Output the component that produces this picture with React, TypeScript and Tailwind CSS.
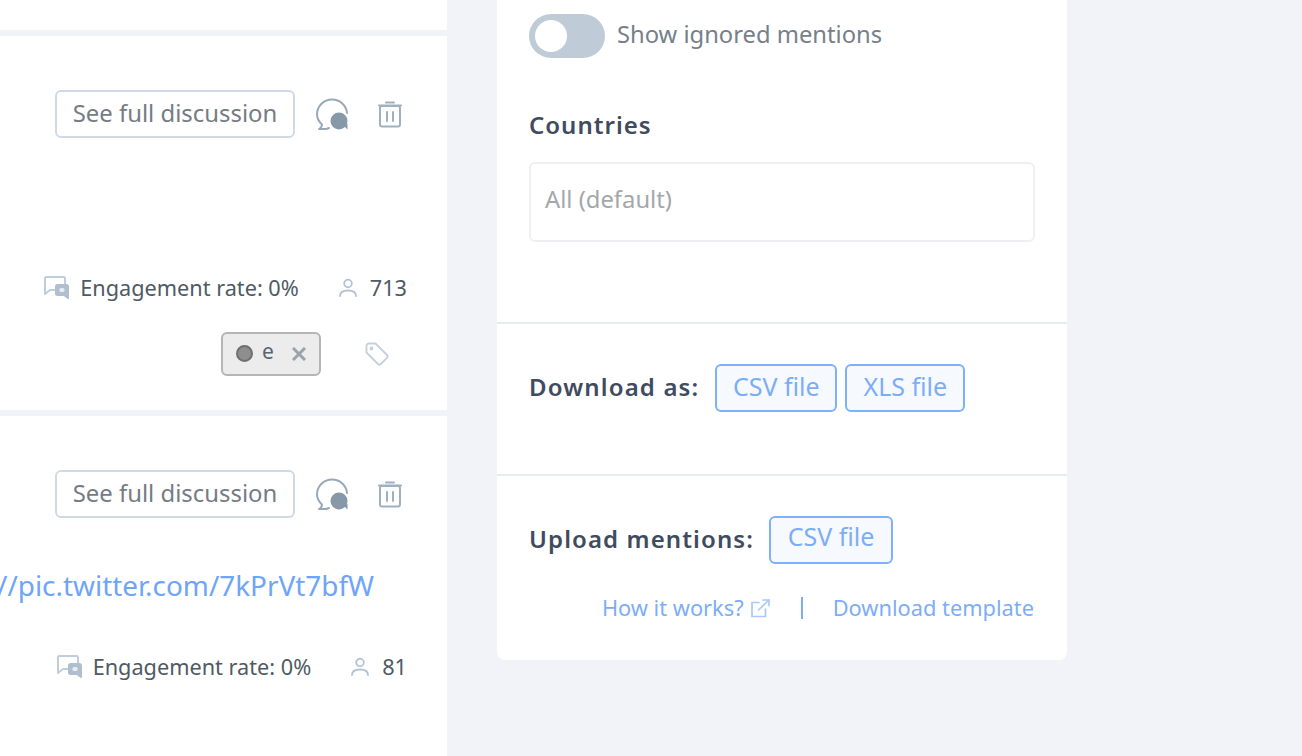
const font = { fontFamily: '"Noto Sans", "Open Sans", sans-serif' };

const ChatIcon = () => (
  <svg width="36" height="36" viewBox="0 0 36 36" fill="none">
    <path
      d="M8 28.500C4.800 25.500 3 22.500 3 18.500 3 10 10 3.500 18 3.500c8 0 14.500 6 15 13.500M8 28.500c0 1.800-1.200 3.500-3 4.500h7l3-1"
      stroke="#97a9b9"
      strokeWidth="2"
      strokeLinecap="round"
      strokeLinejoin="round"
    />
    <circle cx="25" cy="25" r="8.500" fill="#8799a9" />
    <path d="M30 30l3.500 3.500v-6z" fill="#8799a9" />
  </svg>
);

const TrashIcon = () => (
  <svg width="26" height="30" viewBox="0 0 26 30" fill="none" stroke="#9fb0bf" strokeWidth="2" strokeLinecap="round">
    <path d="M2 6.500h22M9 3.500h8" />
    <rect x="3" y="7" width="20" height="20.500" rx="2" />
    <path d="M10 13v9M16 13v9" />
  </svg>
);

const EngagementIcon = () => (
  <svg width="28" height="26" viewBox="0 0 28 26" fill="none">
    <path d="M2 19V3.500A1.500 1.500 0 0 1 3.500 2h17A1.500 1.500 0 0 1 22 3.500V9M2 19l5-4h6" stroke="#c0cddb" strokeWidth="2" strokeLinecap="round" strokeLinejoin="round" />
    <path d="M13 11.500A1.500 1.500 0 0 1 14.500 10h9a1.500 1.500 0 0 1 1.500 1.500V23l-4-3h-6.500a1.500 1.500 0 0 1-1.500-1.500z" stroke="#b0bfce" strokeWidth="2" fill="#b0bfce" strokeLinejoin="round" />
    <rect x="16.500" y="13" width="5" height="4" rx="1.500" fill="#e6ecf2" />
  </svg>
);

const UserIcon = () => (
  <svg width="20" height="20" viewBox="0 0 20 20" fill="none" stroke="#b4c3d3" strokeWidth="1.800" strokeLinecap="round">
    <circle cx="10" cy="5.500" r="3.800" />
    <path d="M2 18c0-3.500 3-5.500 8-5.500s8 2 8 5.500" />
  </svg>
);

const ExternalIcon = () => (
  <svg width="21" height="20" viewBox="0 0 21 20" fill="none" stroke="#a8cafb" strokeWidth="1.700" strokeLinecap="round">
    <path d="M9 4.500H2V18.500H15.500V11" />
    <path d="M8.500 12L19 2M13 2H19V7.500" />
  </svg>
);

const TagIcon = () => (
  <svg width="26" height="26" viewBox="0 0 26 26" fill="none" stroke="#c4d0db" strokeWidth="1.800" strokeLinejoin="round">
    <path d="M2.500 5A2.500 2.500 0 0 1 5 2.500h6.500L23 14a2 2 0 0 1 0 2.800L16.800 23a2 2 0 0 1-2.800 0L2.500 11.500z" />
    <circle cx="7.500" cy="7.500" r="1" />
  </svg>
);

const Separator = () => <div className="h-[6px] bg-[#f2f3f8]" />;

const DiscussionRow = () => (
  <div className="flex items-center justify-end pr-[44px]">
    <button className="flex h-[48px] w-[240px] items-center justify-center rounded-[6px] border-2 border-[#cfdae5] bg-white pb-[2px] text-[23.900px] text-[#757c84]">
      See full discussion
    </button>
    <span className="ml-[19px] flex">
      <ChatIcon />
    </span>
    <span className="ml-[27px] flex">
      <TrashIcon />
    </span>
  </div>
);

const Stats = ({ reach, pr }: { reach: string; pr: string }) => (
  <div className={`flex items-center justify-end text-[21.700px] text-[#4f5a64] ${pr}`}>
    <EngagementIcon />
    <span className="ml-[9px]">Engagement rate: 0%</span>
    <span className="ml-[39px] flex">
      <UserIcon />
    </span>
    <span className="ml-[12px]">{reach}</span>
  </div>
);

const App = () => (
  <div className="flex h-[756px] w-[1302px] overflow-hidden bg-[#f2f3f8]" style={font}>
    <div className="flex w-[447px] flex-col bg-white">
      <div className="h-[30px] shrink-0" />
      <Separator />

      <div className="flex h-[374px] shrink-0 flex-col pt-[54px]">
        <DiscussionRow />
        <div className="mt-[134px]">
          <Stats reach="713" pr="pr-[40px]" />
        </div>
        <div className="mt-[27px] flex items-center justify-end pr-[57px]">
          <div className="flex h-[44px] w-[100px] items-center rounded-[6px] border-2 border-[#b5b5b5] bg-[#ececec] pl-[13px] text-[21px] text-[#59666f]">
            <span className="h-[17px] w-[17px] rounded-full border-2 border-[#6f6f6f] bg-[#8e8e8e]" />
            <span className="mb-[5px] ml-[9px] leading-none">e</span>
            <span className="ml-[18px] text-[#9aa3ab]">
              <svg width="14" height="14" viewBox="0 0 14 14" stroke="currentColor" strokeWidth="3">
                <path d="M1 1l12 12M13 1L1 13" />
              </svg>
            </span>
          </div>
          <span className="ml-[43px] flex">
            <TagIcon />
          </span>
        </div>
      </div>

      <Separator />

      <div className="flex flex-1 flex-col pt-[54px]">
        <DiscussionRow />
        <a className="ml-[-3px] mt-[48px] whitespace-nowrap text-[27.900px] leading-[38px] text-[#6ea5f8]">
          //pic.twitter.com/7kPrVt7bfW
        </a>
        <div className="mt-[47px]">
          <Stats reach="81" pr="pr-[40px]" />
        </div>
      </div>
    </div>

    <div className="ml-[50px] h-[660px] w-[570px] rounded-b-[8px] bg-white">
      <div className="h-[324px] border-b-2 border-[#e9ecef] px-[32px] pt-[14px]">
        <div className="flex items-center">
          <div className="flex h-[44px] w-[76px] items-center rounded-full bg-[#bfccd8] pl-[6px]">
            <span className="h-[32px] w-[32px] rounded-full bg-white" />
          </div>
          <span className="mb-[2px] ml-[12px] text-[23.750px] text-[#76808a]">Show ignored mentions</span>
        </div>
        <h3 className="mt-[48px] text-[24px] font-semibold leading-[38px] tracking-[1px] text-[#3f4b5f]">Countries</h3>
        <div className="mt-[18px] flex h-[80px] w-[506px] items-center rounded-[6px] border-2 border-[#eef0f3] pb-[4px] pl-[14px] text-[23.800px] text-[#a3a7ab]">
          All (default)
        </div>
      </div>

      <div className="flex h-[152px] items-start border-b-2 border-[#e9ecef] px-[32px] pt-[40px]">
        <span className="text-[24px] font-semibold leading-[46px] tracking-[1.150px] text-[#3f4b5f]">Download as:</span>
        <button className="ml-[16px] h-[48px] w-[122px] rounded-[6px] border-2 border-[#7eb0fb] bg-[#f6f9fe] pb-[2px] text-[25px] text-[#7dadf8]">CSV file</button>
        <button className="ml-[8px] h-[48px] w-[120px] rounded-[6px] border-2 border-[#7eb0fb] bg-[#f6f9fe] pb-[2px] text-[25px] text-[#7dadf8]">XLS file</button>
      </div>

      <div className="px-[32px] pt-[40px]">
        <div className="flex items-start">
          <span className="text-[24px] font-semibold leading-[46px] tracking-[1.100px] text-[#3f4b5f]">Upload mentions:</span>
          <button className="ml-[15px] h-[48px] w-[124px] rounded-[6px] border-2 border-[#7eb0fb] bg-[#f6f9fe] pb-[6px] text-[25px] text-[#7dadf8]">CSV file</button>
        </div>
        <div className="mt-[27px] flex items-center justify-end pr-[1px] text-[21.800px] leading-[34px] text-[#7dadf8]">
          <span>How it works?</span>
          <span className="ml-[6px] flex">
            <ExternalIcon />
          </span>
          <span className="ml-[30px] h-[22px] w-[2px] bg-[#7dadf8]" />
          <span className="ml-[30px]">Download template</span>
        </div>
      </div>
    </div>
  </div>
);

export default App;
